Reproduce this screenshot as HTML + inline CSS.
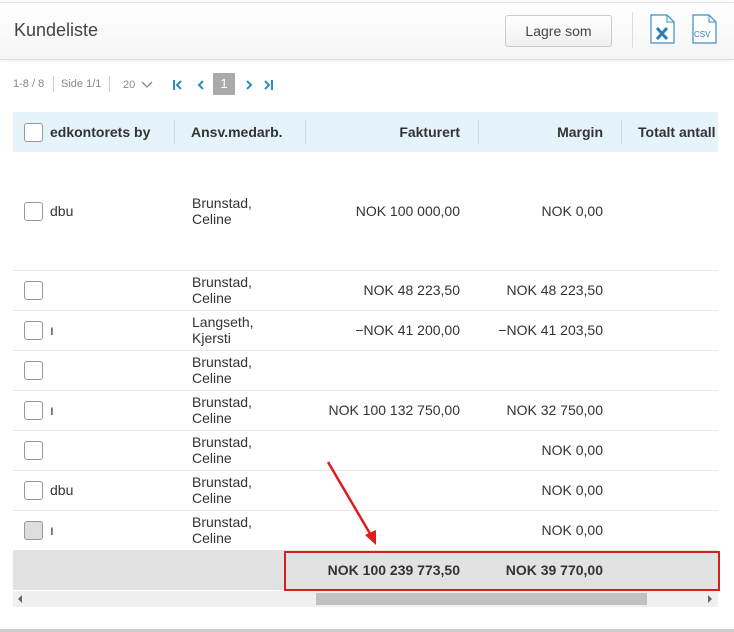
<!DOCTYPE html>
<html><head><style>
body{margin:0;width:734px;height:632px;background:#fff;font-family:"Liberation Sans",sans-serif;position:relative;overflow:hidden;color:#333}
.a{position:absolute}
.hdr{left:0;top:2px;width:734px;height:56px;background:linear-gradient(#fff,#f5f5f5);border-top:1px solid #e6e6e6;border-bottom:1px solid #ddd;box-shadow:0 1px 3px rgba(0,0,0,.08)}
.cb{width:17px;height:17px;border:1px solid #999;border-radius:3px;background:#fff;left:24px}
.t{font-size:14px;white-space:nowrap}
.r{text-align:right}
.line{left:13px;width:705px;height:1px;background:#e8e8e8}
.sep{width:1px;height:24px;background:#c8dde8;top:120px}
</style></head><body>
<div class="a hdr"></div>
<div class="a t" style="left:14px;top:20px;font-size:18px;color:#444">Kundeliste</div>
<div class="a" style="left:505px;top:15px;width:105px;height:30px;border:1px solid #ccc;border-radius:3px;background:linear-gradient(#fff,#f0f0f0);font-size:14px;text-align:center;line-height:30px;color:#444">Lagre som</div>
<div class="a" style="left:632px;top:12px;width:1px;height:36px;background:#ddd"></div>
<svg class="a" style="left:650px;top:14px" width="26" height="30"><path d="M1 1H17L24 8V29H1Z" fill="#fff" stroke="#3a8fc4" stroke-width="1.2"/><path d="M17 1V8H24" fill="none" stroke="#3a8fc4"/><path d="M7 14L17 25M17 14L7 25" stroke="#2a7fba" stroke-width="3"/></svg>
<svg class="a" style="left:692px;top:14px" width="26" height="30"><path d="M1 1H17L24 8V29H1Z" fill="#fff" stroke="#3a8fc4" stroke-width="1.2"/><path d="M17 1V8H24" fill="none" stroke="#3a8fc4"/><text x="2" y="23" font-size="8" fill="#2a7fba" font-family="Liberation Sans">CSV</text></svg>
<div class="a t" style="left:13px;top:78px;font-size:11px;color:#888">1-8 / 8</div>
<div class="a" style="left:53px;top:76px;width:1px;height:16px;background:#ccc"></div>
<div class="a t" style="left:61px;top:78px;font-size:11px;color:#888">Side 1/1</div>
<div class="a" style="left:109px;top:76px;width:1px;height:16px;background:#ccc"></div>
<div class="a t" style="left:123px;top:79px;font-size:11px;color:#888">20</div>
<svg class="a" style="left:141px;top:81px" width="12" height="8"><path d="M1 1L6 6L11 1" fill="none" stroke="#888" stroke-width="1.3"/></svg>
<svg class="a" style="left:172px;top:79px" width="110" height="12"><g fill="none" stroke="#2a8fc0" stroke-width="2"><path d="M2 1V11M9 2L5 6L9 10"/><path d="M31 2L27 6L31 10"/><path d="M75 2L79 6L75 10"/><path d="M93 2L97 6L93 10M100 1V11"/></g></svg>
<div class="a" style="left:213px;top:73px;width:22px;height:22px;background:#aaa;color:#fff;font-size:13px;text-align:center;line-height:22px">1</div>
<div class="a" style="left:13px;top:112px;width:705px;height:40px;background:#e5f3fb"></div>
<div class="a cb" style="top:123px"></div>
<div class="a t" style="left:50px;top:124px;font-weight:bold">edkontorets by</div>
<div class="a sep" style="left:174px"></div>
<div class="a t" style="left:191px;top:124px;font-weight:bold">Ansv.medarb.</div>
<div class="a sep" style="left:305px"></div>
<div class="a t r" style="left:300px;width:160px;top:124px;font-weight:bold">Fakturert</div>
<div class="a sep" style="left:478px"></div>
<div class="a t r" style="left:480px;width:123px;top:124px;font-weight:bold">Margin</div>
<div class="a sep" style="left:621px"></div>
<div class="a t" style="left:638px;top:124px;font-weight:bold;width:80px;overflow:hidden">Totalt antall</div>

<div class="a cb" style="top:202px"></div><div class="a t" style="left:50px;top:203px">dbu</div>
<div class="a t" style="left:192px;top:195px;line-height:16px">Brunstad,<br>Celine</div>
<div class="a t r" style="left:300px;width:160px;top:203px">NOK 100 000,00</div>
<div class="a t r" style="left:480px;width:123px;top:203px">NOK 0,00</div>
<div class="a line" style="top:270px"></div>

<div class="a cb" style="top:281px"></div>
<div class="a t" style="left:192px;top:274px;line-height:16px">Brunstad,<br>Celine</div>
<div class="a t r" style="left:300px;width:160px;top:282px">NOK 48 223,50</div>
<div class="a t r" style="left:480px;width:123px;top:282px">NOK 48 223,50</div>
<div class="a line" style="top:310px"></div>

<div class="a cb" style="top:321px"></div><div class="a t" style="left:50px;top:322px">ı</div>
<div class="a t" style="left:192px;top:314px;line-height:16px">Langseth,<br>Kjersti</div>
<div class="a t r" style="left:300px;width:160px;top:322px">−NOK 41 200,00</div>
<div class="a t r" style="left:480px;width:123px;top:322px">−NOK 41 203,50</div>
<div class="a line" style="top:350px"></div>

<div class="a cb" style="top:361px"></div>
<div class="a t" style="left:192px;top:354px;line-height:16px">Brunstad,<br>Celine</div>
<div class="a line" style="top:390px"></div>

<div class="a cb" style="top:401px"></div><div class="a t" style="left:50px;top:402px">ı</div>
<div class="a t" style="left:192px;top:394px;line-height:16px">Brunstad,<br>Celine</div>
<div class="a t r" style="left:300px;width:160px;top:402px">NOK 100 132 750,00</div>
<div class="a t r" style="left:480px;width:123px;top:402px">NOK 32 750,00</div>
<div class="a line" style="top:430px"></div>

<div class="a cb" style="top:441px"></div>
<div class="a t" style="left:192px;top:434px;line-height:16px">Brunstad,<br>Celine</div>
<div class="a t r" style="left:480px;width:123px;top:442px">NOK 0,00</div>
<div class="a line" style="top:470px"></div>

<div class="a cb" style="top:481px"></div><div class="a t" style="left:50px;top:482px">dbu</div>
<div class="a t" style="left:192px;top:474px;line-height:16px">Brunstad,<br>Celine</div>
<div class="a t r" style="left:480px;width:123px;top:482px">NOK 0,00</div>
<div class="a line" style="top:510px"></div>

<div class="a cb" style="top:521px;background:#ddd"></div><div class="a t" style="left:50px;top:522px">ı</div>
<div class="a t" style="left:192px;top:514px;line-height:16px">Brunstad,<br>Celine</div>
<div class="a t r" style="left:480px;width:123px;top:522px">NOK 0,00</div>

<div class="a" style="left:13px;top:550px;width:705px;height:40px;background:#e2e2e2"></div>
<div class="a t r" style="left:290px;width:170px;top:562px;font-weight:bold">NOK 100 239 773,50</div>
<div class="a t r" style="left:480px;width:123px;top:562px;font-weight:bold">NOK 39 770,00</div>
<div class="a" style="left:284px;top:551px;width:432px;height:36px;border:2px solid #d81e1e"></div>
<div class="a" style="left:13px;top:591px;width:705px;height:16px;background:#f0f0f0"></div>
<div class="a" style="left:316px;top:593px;width:331px;height:12px;background:#c1c1c1"></div>
<svg class="a" style="left:17px;top:595px" width="6" height="8"><path d="M5 0V8L1 4Z" fill="#666"/></svg>
<svg class="a" style="left:707px;top:595px" width="6" height="8"><path d="M1 0V8L5 4Z" fill="#666"/></svg>
<svg class="a" style="left:320px;top:455px" width="70" height="100"><path d="M8 7L52 82" stroke="#e01b1b" stroke-width="2.5"/><path d="M45 80L56 90L56 75Z" fill="#e01b1b"/></svg>
<div class="a" style="left:0;top:629px;width:734px;height:3px;background:#ccc"></div>
</body></html>
